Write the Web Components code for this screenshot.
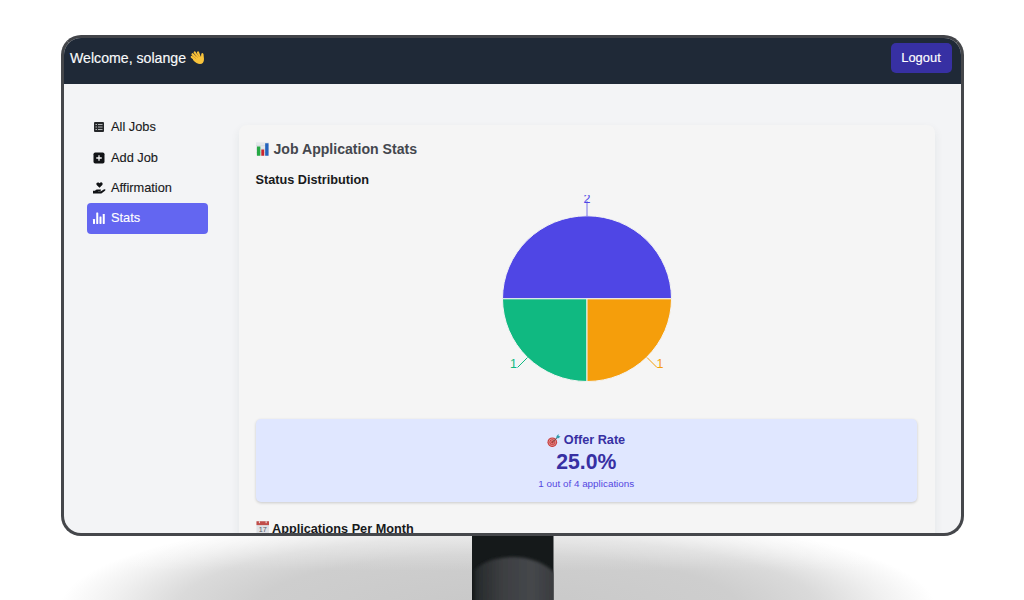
<!DOCTYPE html>
<html lang="en">
<head>
<meta charset="utf-8">
<title>Job Tracker – Stats</title>
<style>
html,body{margin:0;height:600px;overflow:hidden;background:#fff}
body{font-family:"Liberation Sans",Arial,sans-serif;color:#18191b}
</style>
</head>
<body>
<desktop-monitor>
  <app-header name="solange"></app-header>
  <app-layout>
    <side-nav slot="nav">
      <nav-item icon="list">All Jobs</nav-item>
      <nav-item icon="add">Add Job</nav-item>
      <nav-item icon="care">Affirmation</nav-item>
      <nav-item icon="bars" active>Stats</nav-item>
    </side-nav>
    <stats-panel></stats-panel>
  </app-layout>
</desktop-monitor>
<script>
const define=(name,html)=>{
  const t=document.createElement('template');t.innerHTML=html;
  customElements.define(name,class extends HTMLElement{
    constructor(){super();this.attachShadow({mode:'open'}).append(t.content.cloneNode(true));}
  });
};

define('desktop-monitor',`
<style>
:host{display:block;height:600px;overflow:hidden;background:#fff}
.screen{box-sizing:border-box;width:903px;height:501px;margin:35px 0 0 61px;border:3px solid #45474b;border-top-color:#424449;border-radius:20px;background:#f3f4f6;overflow:hidden;position:relative;z-index:1}
.base{height:64px;width:1024px;display:flex}
svg{display:block}
</style>
<div class="screen"><slot></slot></div>
<div class="base">
<svg width="1024" height="64" viewBox="0 0 1024 64">
<defs>
<radialGradient id="sh" cx="0" cy="0" r="1" gradientUnits="userSpaceOnUse" gradientTransform="translate(498 72) scale(438 98)">
<stop offset="0" stop-color="#c8c8c8"/><stop offset=".55" stop-color="#cecece"/><stop offset=".73" stop-color="#dadada"/><stop offset=".88" stop-color="#f0f0f0"/><stop offset="1" stop-color="#fff"/>
</radialGradient>
<linearGradient id="top" x2="0" y2="1"><stop offset="0" stop-color="#fff" stop-opacity=".4"/><stop offset=".55" stop-color="#fff" stop-opacity="0"/></linearGradient>
<linearGradient id="leg"><stop offset="0" stop-color="#25292b"/><stop offset=".35" stop-color="#3d3f42"/><stop offset=".7" stop-color="#45474b"/><stop offset="1" stop-color="#393b3e"/></linearGradient>
<filter id="b" x="-20%" y="-20%" width="140%" height="140%"><feGaussianBlur stdDeviation="1.7"/></filter>
<clipPath id="c"><rect x="472" width="81.5" height="64"/></clipPath>
</defs>
<rect width="1024" height="64" fill="url(#sh)"/>
<rect width="1024" height="64" fill="url(#top)"/>
<g clip-path="url(#c)"><rect x="472" width="82" height="64" fill="#15191a"/>
<path d="M475 80V34Q486 22 512 21Q539 21 556 38V80Z" fill="url(#leg)" filter="url(#b)"/></g>
</svg></div>`);

define('app-header',`
<style>
:host{display:flex;box-sizing:border-box;height:46px;padding:0 9.5px 6px 6px;align-items:center;justify-content:space-between;background:#1f2937;color:#f8f9fb}
.hi{display:flex;align-items:center;gap:4px;font-size:14.15px;line-height:18px;-webkit-text-stroke:.15px}
svg{display:block;width:15px;height:15px;margin-top:-1px}
button{font:500 12.9px/18px "Liberation Sans",Arial,sans-serif;-webkit-text-stroke:.15px;color:#fff;background:#3730a3;border:0;border-radius:5px;width:61px;height:30px;padding:0}
</style>
<div class="hi"><span>Welcome, solange</span>
<svg viewBox="0 0 30 30"><g fill="none" stroke="#f8c33b" stroke-linecap="round" stroke-width="4.4"><path d="M18 18L9.5 5M14 19L5 8.5M12 21L3.5 14M20 16L16 5"/></g><path d="M6 18L17 10L22 14L22.5 8Q24.5 4 27 8L28 18Q28 28 20 28Q13 28 6 20Z" fill="#f8c33b"/><path d="M8.5 7L15.5 15.5M5.5 12L12.5 18M14 7L19 14" stroke="#c9841d" stroke-width="1" fill="none"/></svg></div>
<button>Logout</button>`);

define('app-layout',`
<style>
:host{display:grid;grid-template-columns:175px 695.5px;align-items:start;height:449px}
</style><slot name="nav"></slot><slot></slot>`);

define('side-nav',`
<style>:host{display:flex;flex-direction:column;width:121px;padding:28px 0 0 23px}</style><slot></slot>`);

const icons={
list:'<path fill="#25272a" d="M4 2h16q2 0 2 2v16q0 2-2 2H4q-2 0-2-2V4q0-2 2-2z"/><path stroke="#c9cbce" stroke-width="1.7" d="M5 7h3M10 7h9M5 12h3M10 12h9M5 17h3M10 17h9"/>',
add:'<rect x="1" y="1" width="22" height="22" rx="3.5" fill="#111316"/><path d="M12 6.5v11M6.5 12h11" stroke="#f3f4f6" stroke-width="2.6"/>',
care:'<path fill="#111316" d="M13 11.5L7.4 6Q6 4.2 7.2 2.2Q9 0 11.3 1.2L13 2.7L14.7 1.2Q17-.4 18.8 2.2Q20 4.2 18.6 6ZM0 17.5H4L6 15.5Q8 14.6 10 15.2H15Q16.8 15.6 16 17Q15.5 17.8 13 17.8H10V18.6H16L21.5 14.8Q23.5 13.8 24.8 15.1Q25.3 16.3 24 17.3L18 22Q16.8 23 15 23H0Z"/>',
bars:'<g fill="#fff"><rect x="0" y="14" width="4" height="10" rx=".8"/><rect x="6.5" y="1" width="4" height="23" rx=".8"/><rect x="13" y="9" width="4" height="15" rx=".8"/><rect x="19.5" y="4" width="4" height="20" rx=".8"/></g>'};
customElements.define('nav-item',class extends HTMLElement{
  constructor(){super();this.attachShadow({mode:'open'});}
  connectedCallback(){this.shadowRoot.innerHTML=`
<style>
:host{display:flex;align-items:center;box-sizing:border-box;height:30.4px;padding-left:6px;gap:6px;font-size:12.8px;line-height:18px;color:#18191b;border-radius:4px;-webkit-text-stroke:.12px}
:host([active]){background:#6366f1;color:#fff}
svg{width:12px;height:12px;overflow:visible;flex:none}
</style><svg viewBox="0 0 24 24">${icons[this.getAttribute('icon')]}</svg><slot></slot>`;}
});

define('stats-panel',`
<style>
:host{display:flex;flex-direction:column;box-sizing:border-box;width:695.5px;height:520px;margin-top:41px;padding:15px 17.5px 0 16.5px;background:#f5f5f5;border-radius:8px;box-shadow:0 4px 10px rgba(30,50,50,.075)}
h2,h3{margin:0;display:flex;align-items:center;font-weight:700}
h2{font-size:14.1px;line-height:18px;color:#44474e;gap:4.5px}
h3{font-size:12.7px;line-height:18px;color:#18191b;gap:3px}
h3.s{margin-top:13px}
h3.m{margin-top:17.3px}
h2 svg,h3 svg{width:13.5px;height:14px;flex:none}
h3.m svg{margin-top:-1px}
</style>
<h2><svg viewBox="0 0 28 28"><path fill="#e4e8eb" d="M0 0h28v28H0z"/><path stroke="#cbd2d6" d="M0 7h28M0 14h28M0 21h28"/><path fill="#26a944" d="M2 9h7v19H2z"/><path fill="#c9252f" d="M11 15h6v13h-6z"/><path fill="#2463bd" d="M19 2h7v26h-7z"/></svg>Job Application Stats</h2>
<h3 class="s">Status Distribution</h3>
<pie-chart></pie-chart>
<offer-rate></offer-rate>
<h3 class="m"><svg viewBox="0 0 28 28"><path fill="#dfe1e5" d="M1 0h26v28H1z"/><path fill="#c14d49" d="M1 0h26v8H1z"/><path stroke="#eee" stroke-width="2" d="M7 0v4M21 0v4"/><text x="14" y="22" text-anchor="middle" font-size="15" font-weight="400" fill="#555b66">17</text></svg>Applications Per Month</h3>`);

define('pie-chart',`
<style>:host{display:block;height:213px;margin:6px 0 0 226px}svg{display:block;width:210px;height:213px;overflow:hidden}text{font-size:12.5px}</style>
<svg viewBox="481.5 195 210 213">
<g stroke="#f4f4f4" stroke-width="1">
<path fill="#4f46e5" d="M502 298.8A84.5 83 0 0 1 671 298.8Z"/>
<path fill="#10b981" d="M502 298.8A84.5 83 0 0 0 586.5 381.5V298.8Z"/>
<path fill="#f59e0b" d="M671 298.8A84.5 83 0 0 1 586.5 381.5V298.8Z"/></g>
<g fill="none" stroke-width="1"><path stroke="#4f46e5" stroke-opacity=".75" d="M586.5 216V201"/><path stroke="#10b981" d="M527 357.5L517 367.5"/><path stroke="#f59e0b" d="M646.5 357.5L656.5 367.5"/></g>
<text x="586.5" y="202.5" text-anchor="middle" fill="#4f46e5">2</text>
<text x="516.5" y="367.5" text-anchor="end" fill="#10b981">1</text>
<text x="656" y="367.5" fill="#f59e0b">1</text>
</svg>`);

define('offer-rate',`
<style>
:host{display:flex;flex-direction:column;align-items:center;box-sizing:border-box;height:83px;margin-top:11.4px;padding-top:12.1px;background:#e0e7ff;border-radius:5px;box-shadow:0 1px 3px rgba(0,0,0,.18);color:#3730a3}
.t{display:flex;align-items:center;gap:3px;font-size:12.7px;line-height:18px;font-weight:700}
.v{font-size:21.2px;line-height:26px;font-weight:700}
.d{font-size:9.87px;line-height:18px;color:#5548df}
svg{width:13.5px;height:13.5px}
</style>
<div class="t"><svg viewBox="0 0 28 28"><circle cx="11" cy="17" r="10" fill="#c93c3c"/><circle cx="11" cy="17" r="7" fill="none" stroke="#e3a5a3" stroke-width="1.6"/><circle cx="11" cy="17" r="3.5" fill="none" stroke="#e3a5a3" stroke-width="1.4"/><path d="M11 17L23 6" stroke="#66493f" stroke-width="2"/><path d="M19 9L20 4L24 0L24 4L28 5L24 9Z" fill="#319cab"/></svg>Offer Rate</div>
<div class="v">25.0%</div><div class="d">1 out of 4 applications</div>`);
</script>
</body>
</html>
